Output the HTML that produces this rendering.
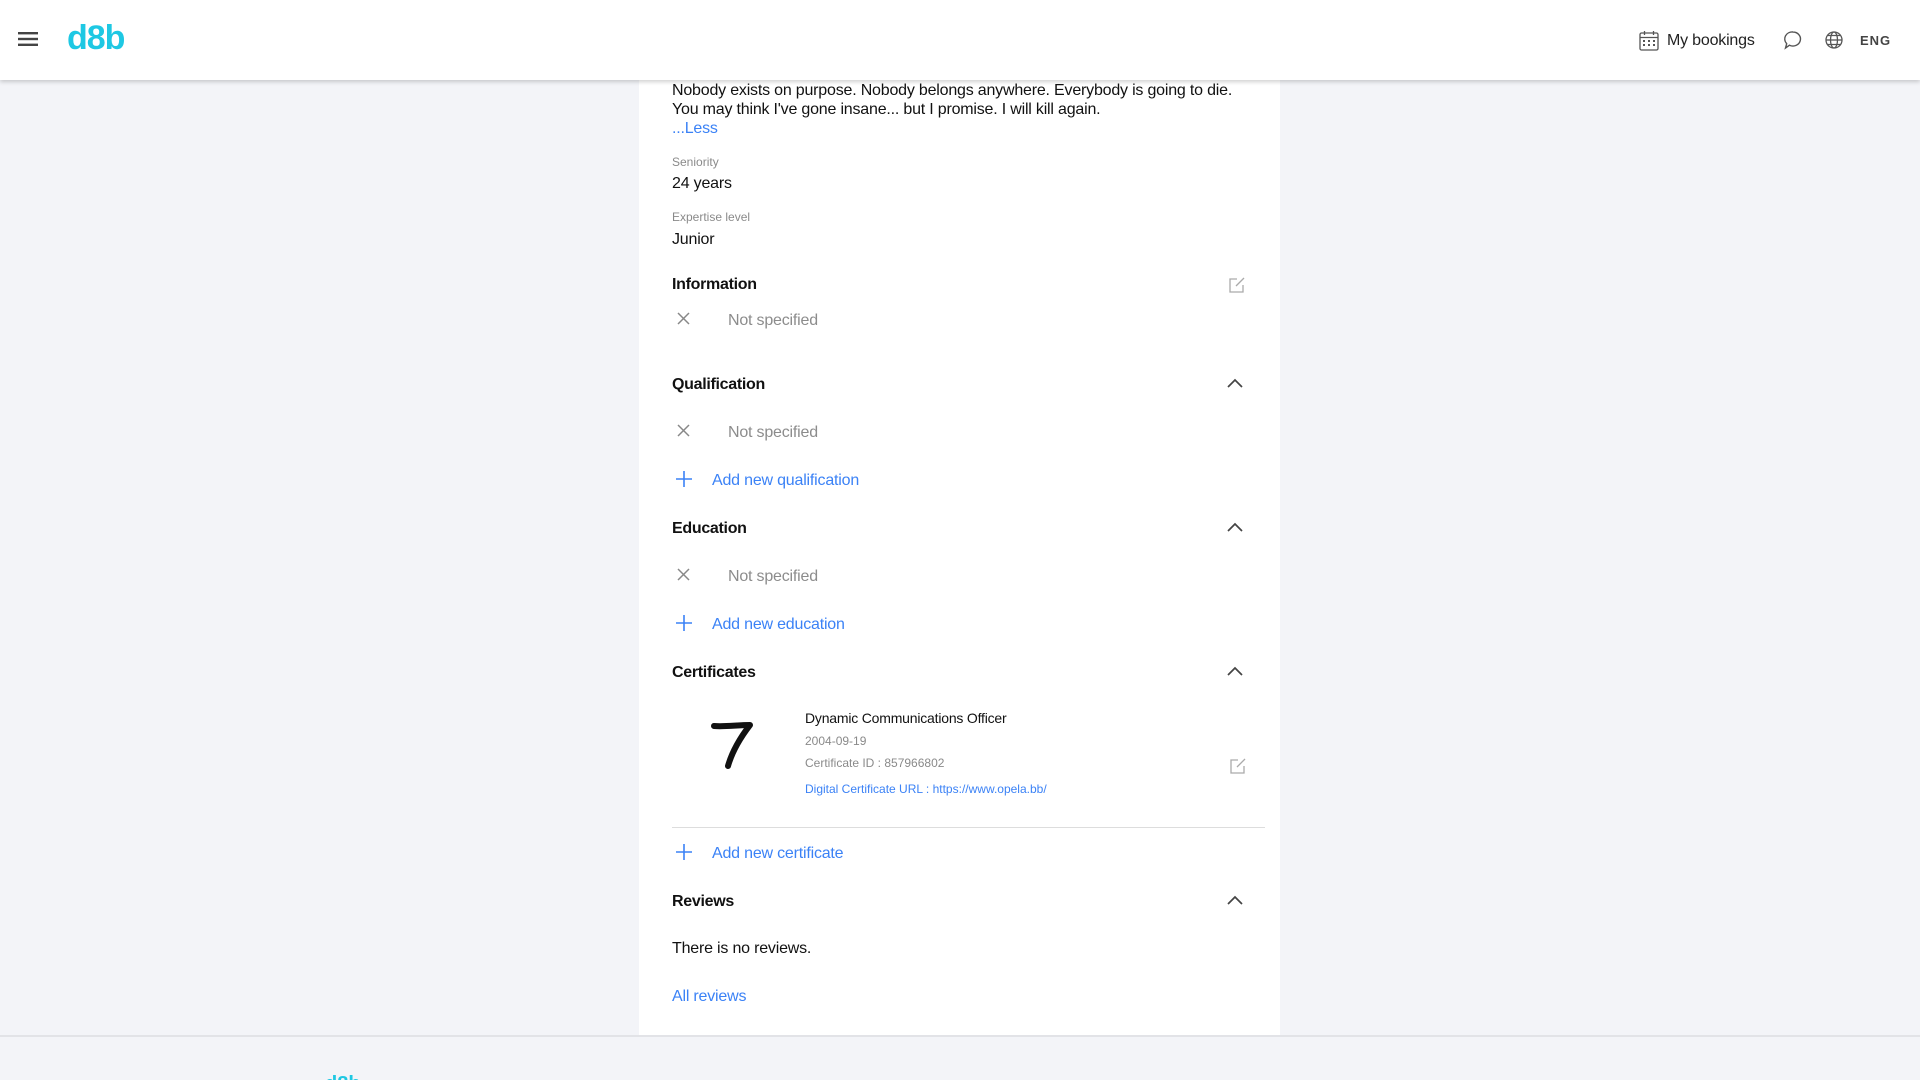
<!DOCTYPE html>
<html><head><meta charset="utf-8"><style>
*{margin:0;padding:0;box-sizing:border-box}
body{width:1920px;height:1080px;overflow:hidden;background:#f3f4f8;font-family:"Liberation Sans",Roboto,sans-serif;color:#111;position:relative}
.hdr{position:absolute;left:0;top:0;width:1920px;height:80px;background:#fff;box-shadow:0 2px 4px rgba(0,0,0,.18);z-index:2}
.a{position:absolute;white-space:nowrap}
.card{position:absolute;left:639px;top:0;width:641px;height:1035px;background:#fff}
.t16{font-size:16px;letter-spacing:-0.2px}
.lbl{font-size:12px;color:#8a8a8a}
.h{font-size:16px;font-weight:bold;color:#111;letter-spacing:-0.3px}
.ns{font-size:16px;color:#8c8c8c;letter-spacing:-0.2px}
.blue{color:#3b82f6}
.foot{position:absolute;left:0;top:1035px;width:1920px;height:45px;background:#f3f4f8;border-top:2px solid #e2e3e7;overflow:hidden}
</style></head><body>
<div class="card"></div>
<div class="hdr">
 <svg class="a" style="left:18px;top:32px" width="20" height="14"><rect y="0" width="20" height="2.4" fill="#444"/><rect y="5.8" width="20" height="2.4" fill="#444"/><rect y="11.6" width="20" height="2.4" fill="#444"/></svg>
 <div class="a" style="left:67px;top:19px;font-size:34px;font-weight:bold;color:#1ec8e3;letter-spacing:-1px">d8b</div>
 <svg class="a" style="left:1639px;top:30px" width="20" height="21" viewBox="0 0 20 21" fill="none" stroke="#555" stroke-width="1.3"><rect x="1" y="3" width="18" height="17" rx="1.5"/><line x1="1" y1="7.5" x2="19" y2="7.5"/><line x1="5.5" y1="1" x2="5.5" y2="5"/><line x1="14.5" y1="1" x2="14.5" y2="5"/><g fill="#555" stroke="none"><rect x="4" y="10" width="2" height="2"/><rect x="9" y="10" width="2" height="2"/><rect x="14" y="10" width="2" height="2"/><rect x="4" y="14" width="2" height="2"/><rect x="9" y="14" width="2" height="2"/><rect x="14" y="14" width="2" height="2"/></g></svg>
 <div class="a t16" style="left:1667px;top:32px;color:#222">My bookings</div>
 <svg class="a" style="left:1783px;top:30px" width="20" height="20" viewBox="0 0 20 20" fill="none" stroke="#555" stroke-width="1.4"><path d="M10 2a7.5 7 0 1 1-3.5 13.2L2.5 18l1.2-4.3A7.5 7 0 0 1 10 2z"/></svg>
 <svg class="a" style="left:1824px;top:30px" width="20" height="20" viewBox="0 0 20 20" fill="none" stroke="#555" stroke-width="1.3"><circle cx="10" cy="10" r="8"/><ellipse cx="10" cy="10" rx="3.5" ry="8"/><line x1="2" y1="10" x2="18" y2="10"/><path d="M3.5 5.5h13M3.5 14.5h13"/></svg>
 <div class="a" style="left:1860px;top:33px;font-size:13px;font-weight:bold;color:#444;letter-spacing:1px">ENG</div>
</div>

<div class="a t16" style="left:672px;top:81px;line-height:19px">Nobody exists on purpose. Nobody belongs anywhere. Everybody is going to die.<br>You may think I've gone insane... but I promise. I will kill again.</div>
<div class="a t16 blue" style="left:672px;top:120px">...Less</div>
<div class="a lbl" style="left:672px;top:155px">Seniority</div>
<div class="a t16" style="left:672px;top:175px">24 years</div>
<div class="a lbl" style="left:672px;top:210px">Expertise level</div>
<div class="a t16" style="left:672px;top:231px">Junior</div>

<div class="a h" style="left:672px;top:276px">Information</div>
<svg class="a" style="left:1228px;top:276px" width="18" height="18" viewBox="0 0 18 18" fill="none" stroke="#aaa" stroke-width="1.3"><path d="M9 3H2v13h13V9"/><path d="M8 10l8-8"/></svg>

<svg class="a" style="left:677px;top:312px" width="13" height="13" stroke="#888" stroke-width="1.5"><path d="M1 1l11 11M12 1L1 12"/></svg>
<div class="a ns" style="left:728px;top:312px">Not specified</div>

<div class="a h" style="left:672px;top:376px">Qualification</div>
<svg class="a" style="left:1227px;top:378px" width="16" height="10" fill="none" stroke="#444" stroke-width="1.7"><path d="M1 9l7-7 7 7"/></svg>
<svg class="a" style="left:677px;top:424px" width="13" height="13" stroke="#888" stroke-width="1.5"><path d="M1 1l11 11M12 1L1 12"/></svg>
<div class="a ns" style="left:728px;top:424px">Not specified</div>
<svg class="a" style="left:676px;top:471px" width="16" height="16" stroke="#3b82f6" stroke-width="1.6"><path d="M8 0v16M0 8h16"/></svg>
<div class="a t16 blue" style="left:712px;top:472px">Add new qualification</div>

<div class="a h" style="left:672px;top:520px">Education</div>
<svg class="a" style="left:1227px;top:522px" width="16" height="10" fill="none" stroke="#444" stroke-width="1.7"><path d="M1 9l7-7 7 7"/></svg>
<svg class="a" style="left:677px;top:568px" width="13" height="13" stroke="#888" stroke-width="1.5"><path d="M1 1l11 11M12 1L1 12"/></svg>
<div class="a ns" style="left:728px;top:568px">Not specified</div>
<svg class="a" style="left:676px;top:615px" width="16" height="16" stroke="#3b82f6" stroke-width="1.6"><path d="M8 0v16M0 8h16"/></svg>
<div class="a t16 blue" style="left:712px;top:616px">Add new education</div>

<div class="a h" style="left:672px;top:664px">Certificates</div>
<svg class="a" style="left:1227px;top:666px" width="16" height="10" fill="none" stroke="#444" stroke-width="1.7"><path d="M1 9l7-7 7 7"/></svg>
<svg class="a" style="left:710px;top:718px" width="45" height="52" viewBox="0 0 45 52" fill="none" stroke="#111" stroke-width="6" stroke-linecap="round" stroke-linejoin="round"><path d="M4 8c10 1 24-1 36-1C30 20 22 34 18 48"/></svg>
<div class="a" style="left:805px;top:710px;font-size:14px;color:#111;letter-spacing:-0.2px">Dynamic Communications Officer</div>
<div class="a" style="left:805px;top:734px;font-size:12px;color:#8a8a8a">2004-09-19</div>
<div class="a" style="left:805px;top:756px;font-size:12px;color:#8a8a8a">Certificate ID : 857966802</div>
<div class="a blue" style="left:805px;top:782px;font-size:12px">Digital Certificate URL : https://www.opela.bb/</div>
<svg class="a" style="left:1229px;top:757px" width="18" height="18" viewBox="0 0 18 18" fill="none" stroke="#aaa" stroke-width="1.3"><path d="M9 3H2v13h13V9"/><path d="M8 10l8-8"/></svg>
<div class="a" style="left:672px;top:827px;width:593px;height:1px;background:#ddd"></div>
<svg class="a" style="left:676px;top:844px" width="16" height="16" stroke="#3b82f6" stroke-width="1.6"><path d="M8 0v16M0 8h16"/></svg>
<div class="a t16 blue" style="left:712px;top:845px">Add new certificate</div>

<div class="a h" style="left:672px;top:893px">Reviews</div>
<svg class="a" style="left:1227px;top:895px" width="16" height="10" fill="none" stroke="#444" stroke-width="1.7"><path d="M1 9l7-7 7 7"/></svg>
<div class="a t16" style="left:672px;top:940px">There is no reviews.</div>
<div class="a t16 blue" style="left:672px;top:988px">All reviews</div>

<div class="foot"><div class="a" style="left:325px;top:36px;font-size:20px;font-weight:bold;color:#1ec8e3">d8b</div></div>
</body></html>
